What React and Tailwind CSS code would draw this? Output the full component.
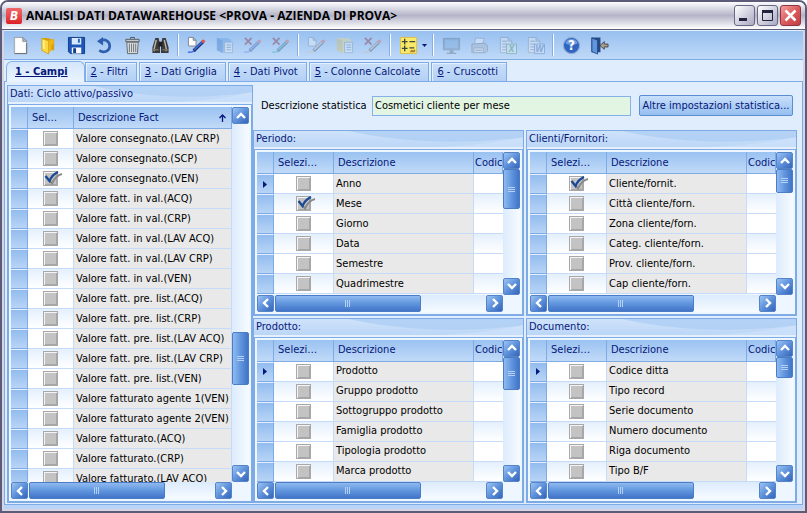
import React from "react";

const FACTS = [
  ["Valore consegnato.(LAV CRP)"],
  ["Valore consegnato.(SCP)"],
  ["Valore consegnato.(VEN)", true],
  ["Valore fatt. in val.(ACQ)"],
  ["Valore fatt. in val.(CRP)"],
  ["Valore fatt. in val.(LAV ACQ)"],
  ["Valore fatt. in val.(LAV CRP)"],
  ["Valore fatt. in val.(VEN)"],
  ["Valore fatt. pre. list.(ACQ)"],
  ["Valore fatt. pre. list.(CRP)"],
  ["Valore fatt. pre. list.(LAV ACQ)"],
  ["Valore fatt. pre. list.(LAV CRP)"],
  ["Valore fatt. pre. list.(VEN)"],
  ["Valore fatturato agente 1(VEN)"],
  ["Valore fatturato agente 2(VEN)"],
  ["Valore fatturato.(ACQ)"],
  ["Valore fatturato.(CRP)"],
  ["Valore fatturato.(LAV ACQ)"],
];

const PANELS = [
  {
    title: "Periodo:",
    current: true,
    thumb: 37,
    rows: [["Anno"], ["Mese", true], ["Giorno"], ["Data"], ["Semestre"], ["Quadrimestre"]],
  },
  {
    title: "Clienti/Fornitori:",
    thumb: 22,
    rows: [
      ["Cliente/fornit.", true],
      ["Città cliente/forn."],
      ["Zona cliente/forn."],
      ["Categ. cliente/forn."],
      ["Prov. cliente/forn."],
      ["Cap cliente/forn."],
    ],
  },
  {
    title: "Prodotto:",
    current: true,
    thumb: 31,
    rows: [
      ["Prodotto"],
      ["Gruppo prodotto"],
      ["Sottogruppo prodotto"],
      ["Famiglia prodotto"],
      ["Tipologia prodotto"],
      ["Marca prodotto"],
    ],
  },
  {
    title: "Documento:",
    current: true,
    thumb: 20,
    rows: [
      ["Codice ditta"],
      ["Tipo record"],
      ["Serie documento"],
      ["Numero documento"],
      ["Riga documento"],
      ["Tipo B/F"],
    ],
  },
];

const TABS = ["Campi", "Filtri", "Dati Griglia", "Dati Pivot", "Colonne Calcolate", "Cruscotti"];

function Pen({ color }) {
  return (
    <>
      <path d="M1 16.500c2 2 5-.5 8-1" fill="none" stroke={color} strokeWidth="1.500" />
      <path d="M7 15.500 17 6" stroke="#1d2a60" strokeWidth="3.400" />
      <path d="M7.500 14.600 16.500 6" stroke={color} strokeWidth="1.800" />
      <circle cx="17.200" cy="5.600" r="1.800" fill="#e8544a" />
    </>
  );
}

function MiniDoc() {
  return <path d="M1.500 1.500h5l3 3v6h-8z M6.500 1.500v3h3" fill="#fff" stroke="#808890" strokeWidth="1" />;
}

function MiniCross() {
  return <path d="m2 2 7 7M9 2 2 9" stroke="#7a1a2a" strokeWidth="2" />;
}

function Book({ color, dark }) {
  return (
    <>
      <path d="M2 2h11l4 2v11l-9 3-6-3z" fill={color} />
      <path d="m2 2 6 3v13l-6-3z" fill={dark} />
      <path d="M10 6.500h8.500v11H10z" fill="#f2f5f8" stroke="#7a8ca4" />
      <path d="M12 9.500h5M12 12h5M12 14.500h5" stroke="#5a7898" />
    </>
  );
}

function Sheet({ letter, color }) {
  return (
    <>
      <path d="M2.500 1.500h8l4 4v12h-12z M10.500 1.500v4h4" fill="#f3f6f8" stroke="#7c8792" />
      <path d="M4.500 5.500h5M4.500 8.500h5M4.500 11.500h4M4.500 14.500h4" stroke="#6a7682" />
      <path d="M9 8.500h10.500v10H9z" fill="#e6edea" stroke={color} />
      <text x="14.300" y="17" textAnchor="middle" fontSize="9" fontWeight="bold" fontStyle="italic" fill={color}>
        {letter}
      </text>
    </>
  );
}

const ICONS = {
  nuovo: (
    <>
      <path d="M3.500 1.500h9l4 4v13h-13z" fill="#f4f4f2" stroke="#9da1a8" />
      <path d="M5 3h6v4h4v10H5z" fill="#fff" />
      <path d="M12.500 1.500v4h4z" fill="#c9ccd2" stroke="#7d828c" />
      <path d="M4 18.500h12.500v-11" fill="none" stroke="#6d6f75" />
    </>
  ),
  apri: (
    <>
      <path d="M3 2h7l2 1.500h4V15h-6z" fill="#d6a30c" />
      <path d="M3 2.500 10 5v14l-7-4z" fill="#ffd83f" stroke="#c99a10" strokeWidth=".8" />
      <path d="m10 5 5.500-1.500V8L13 10v5l-3 3.500z" fill="#edb71b" />
      <path d="m4 4 2 1v9l-2-1z" fill="#fff09a" />
    </>
  ),
  salva: (
    <>
      <path d="M1.500 1.500h17v17H3.500l-2-2z" fill="#1d56b8" stroke="#123c88" />
      <path d="M5 2h10v7H5z" fill="#d9e8fb" />
      <path d="M11.500 3h2v4h-2z" fill="#2a62bd" />
      <path d="M5 12h10v6.500H5z" fill="#f7fafe" />
      <path d="M6.500 13h3v5h-3z" fill="#123c88" />
    </>
  ),
  annulla: (
    <>
      <path d="M6 5.200C10.500 2.500 16 5.500 15.500 11.300c-.5 5-7 7-11 3.700" fill="none" stroke="#2d5fae" strokeWidth="2.800" />
      <path d="M8.500 1v9L2 5.500z" fill="#2d5fae" />
    </>
  ),
  elimina: (
    <>
      <path d="M4 6.500h12l-.8 12H4.800z" fill="#dfe2e3" stroke="#62686d" />
      <path d="M3 3.500h14v2.500H3z" fill="#c6cacd" stroke="#565c62" />
      <path d="M8 3V1.500h4V3" fill="none" stroke="#4f555b" />
      <path d="M6.700 8v9M9 8v9M11.200 8v9M13.400 8v9" stroke="#686e74" />
    </>
  ),
  cerca: (
    <>
      <path d="M4.500 2h3.500l1.500 7v9h-8V12z" fill="#3a3a3a" />
      <path d="M12 2h3.500l3 10v6h-8V9z" fill="#3a3a3a" />
      <path d="M8 6h4v5H8z" fill="#1f1f1f" />
      <path d="M5.500 4 3.500 13v3M14 4l2 9v3" fill="none" stroke="#b9b5a8" strokeWidth="1.500" />
      <path d="M2 14.500h6M12 14.500h6" stroke="#7a6c5a" strokeWidth="1.500" />
    </>
  ),
  modifica: (
    <>
      <MiniDoc />
      <Pen color="#3f6be0" />
    </>
  ),
  libroBlu: <Book color="#5a9ae0" dark="#2b6cc0" />,
  togliBlu: (
    <>
      <MiniCross />
      <Pen color="#4c7ee8" />
    </>
  ),
  togliVerde: (
    <>
      <MiniCross />
      <Pen color="#2aa89c" />
    </>
  ),
  modificaGiallo: (
    <>
      <MiniDoc />
      <Pen color="#d8c890" />
    </>
  ),
  libroGiallo: <Book color="#f0e07c" dark="#dcbc50" />,
  togliGiallo: (
    <>
      <MiniCross />
      <Pen color="#c8b880" />
    </>
  ),
  formule: (
    <>
      <path d="M1.500 1.500h17v17h-17z" fill="#fbe868" stroke="#dcc04a" />
      <path d="M3 6h6M6 3v6M11 6h6M3 13h6M6 10v6M11 12.500h5" stroke="#3a4a3a" strokeWidth="1.400" />
      <path d="M11 17h6v-3l-2 1-2-.5z" fill="#a88430" />
    </>
  ),
  monitor: (
    <>
      <path d="M1.500 2.500h17v12h-17z" fill="#5d7fa4" stroke="#41566e" />
      <path d="M3.500 4.500h13v8h-13z" fill="#6ea2d4" />
      <path d="M8 15h4v2.500h3v1.500H5v-1.500h3z" fill="#4f5b68" />
    </>
  ),
  stampa: (
    <>
      <path d="m6 2 9 .5-1.500 6h-9z" fill="#fff" stroke="#7e8790" />
      <path d="m2 8.500 14-1 2.500 3v5L16 17.500H2z" fill="#a9b1ba" stroke="#5e6872" />
      <path d="M4 12.500h10v5H4z" fill="#e8ecef" stroke="#6f7880" />
      <path d="M5.500 15h7" stroke="#59626b" />
    </>
  ),
  excel: <Sheet letter="X" color="#3c8a5a" />,
  word: <Sheet letter="W" color="#3f66b4" />,
  aiuto: (
    <>
      <circle cx="10" cy="10" r="8.500" fill="#2f65c0" stroke="#8ca8d4" strokeWidth="1.200" />
      <path d="M3.500 7.500a7 7 0 0 1 13 0c-3 2-9 2.500-13 0z" fill="#6f9ce2" />
      <text x="10" y="15" textAnchor="middle" fontSize="14" fontWeight="bold" fill="#fff">
        ?
      </text>
    </>
  ),
  esci: (
    <>
      <path d="M1.500 1.500H11V17H1.500z" fill="#274a86" />
      <path d="m2 2 6 2.500V19l-6-2.500z" fill="#5f96de" stroke="#1f3f78" strokeWidth=".8" />
      <path d="m10.500 10 4.500-4v2.500h4v3h-4V14z" fill="#aaa092" stroke="#423d38" strokeWidth=".9" />
    </>
  ),
};

const TOOLS = [
  ["nuovo", "Nuovo"],
  ["apri", "Apri"],
  ["salva", "Salva"],
  ["annulla", "Annulla"],
  ["elimina", "Elimina"],
  ["cerca", "Cerca"],
  null,
  ["modifica", "Modifica"],
  ["libroBlu", "Archivio", true],
  ["togliBlu", "Rimuovi", true],
  ["togliVerde", "Rimuovi tutto", true],
  null,
  ["modificaGiallo", "Modifica modello", true],
  ["libroGiallo", "Archivio modelli", true],
  ["togliGiallo", "Rimuovi modello", true],
  null,
  ["formule", "Formule"],
  "menu",
  null,
  ["monitor", "Anteprima", true],
  ["stampa", "Stampa", true],
  ["excel", "Esporta in Excel", true],
  ["word", "Esporta in Word", true],
  null,
  ["aiuto", "Aiuto"],
  ["esci", "Esci"],
];

function Toolbar() {
  return (
    <div className="flex h-[30px] shrink-0 items-center border-t border-b border-t-[#e4f0fd] border-b-[#7eaae6] bg-linear-to-b from-[#98c0f0] to-[#bfd9f8] pl-0.5">
      {TOOLS.map((tool, i) => {
        if (tool === null) {
          return (
            <span key={i} className="flex w-2 justify-center">
              <span className="h-[22px] w-0.5 border-l border-l-[#86aee4] bg-white" />
            </span>
          );
        }
        if (tool === "menu") {
          return (
            <button key={i} type="button" aria-label="Altre formule" className="flex w-[7px] items-center">
              <svg viewBox="0 0 5 3" className="h-[3px] w-[5px]">
                <path d="M0 0h5L2.500 3z" fill="#06187a" />
              </svg>
            </button>
          );
        }
        const [icon, label, disabled] = tool;
        return (
          <button
            key={i}
            type="button"
            aria-label={label}
            disabled={disabled}
            className="flex h-6 w-7 items-center justify-center disabled:opacity-35"
          >
            <svg viewBox="0 0 20 20" className="size-[19px]">
              {ICONS[icon]}
            </svg>
          </button>
        );
      })}
    </div>
  );
}

function Tabs() {
  return (
    <div role="tablist" className="flex h-[22px] shrink-0 items-end gap-0.5 border-b border-[#7eaae6] bg-[#dfedfd] pl-0.5">
      {TABS.map((name, i) => (
        <button
          key={name}
          type="button"
          role="tab"
          aria-selected={i === 0}
          className={
            i === 0
              ? "-mr-0.5 -mb-px h-[21px] rounded-t-md border border-b-0 border-[#86b0e8] bg-linear-to-b from-[#d4e6fb] to-[#eaf4ff] pr-4 pl-2 font-bold text-[#06187a] underline"
              : "h-[19px] border border-b-0 border-[#7eaae6] bg-linear-to-b from-[#c9dff9] to-[#b2d0f5] pr-2 pl-[5px] text-[#06187a] shadow-[inset_1px_1px_0_#e4f0fd]"
          }
        >
          {i === 0 ? "1 - Campi" : <><u>{i + 1}</u> - {name}</>}
        </button>
      ))}
    </div>
  );
}

const CHEVRONS = {
  up: "m3 9 4-4 4 4",
  down: "m3 5 4 4 4-4",
  left: "M9 3 5 7l4 4",
  right: "m5 3 4 4-4 4",
};

function ArrowButton({ dir }) {
  const label = { up: "Scorri su", down: "Scorri giù", left: "Scorri a sinistra", right: "Scorri a destra" }[dir];
  return (
    <button
      type="button"
      aria-label={label}
      className="flex size-[17px] shrink-0 items-center justify-center rounded-xs border border-[#5584c8] bg-linear-to-br from-[#9cc4f2] via-[#5f92dc] to-[#3464b8]"
    >
      <svg viewBox="0 0 14 14" className="size-[14px]">
        <path d={CHEVRONS[dir]} fill="none" stroke="#fff" strokeWidth="2.400" />
      </svg>
    </button>
  );
}

function VScroll({ start, size }) {
  return (
    <div className="flex w-[17px] shrink-0 flex-col bg-linear-to-r from-[#dcebfd] to-[#f6fbff]">
      <ArrowButton dir="up" />
      <div className="min-h-0 flex-1">
        <div style={{ height: `${start}%` }} />
        <div
          className="flex flex-col items-center justify-center gap-px rounded-xs border border-[#4c7cc4] bg-linear-to-r from-[#8fbaf0] via-[#6196de] to-[#4274c8]"
          style={{ height: `${size}%` }}
        >
          <span className="h-px w-[7px] bg-[#b4d2f8]" />
          <span className="h-px w-[7px] bg-[#b4d2f8]" />
          <span className="h-px w-[7px] bg-[#b4d2f8]" />
        </div>
      </div>
      <ArrowButton dir="down" />
    </div>
  );
}

function HScroll({ size }) {
  return (
    <div className="mr-[17px] flex h-[17px] shrink-0 bg-linear-to-b from-[#dcebfd] to-[#f6fbff]">
      <ArrowButton dir="left" />
      <div className="min-w-0 flex-1 pl-px">
        <div
          className="flex h-full items-center justify-center gap-px rounded-xs border border-[#4c7cc4] bg-linear-to-b from-[#8fbaf0] via-[#6196de] to-[#4274c8]"
          style={{ width: `${size}%` }}
        >
          <span className="h-[7px] w-px bg-[#b4d2f8]" />
          <span className="h-[7px] w-px bg-[#b4d2f8]" />
          <span className="h-[7px] w-px bg-[#b4d2f8]" />
        </div>
      </div>
      <ArrowButton dir="right" />
    </div>
  );
}

function Check({ label, checked }) {
  return (
    <label className="relative mx-auto block size-[15px]">
      <input
        type="checkbox"
        aria-label={label}
        defaultChecked={checked}
        className="peer block size-[15px] appearance-none border border-[#a8a8a8] bg-[#c3c3c3] shadow-[inset_1px_1px_0_#f4f4f4,inset_-1px_-1px_0_#a6a6a6]"
      />
      <svg viewBox="0 0 20 14" className="pointer-events-none absolute top-0 left-0 hidden h-[14px] w-5 peer-checked:block">
        <path d="m7 10 2 2.500C11 8 14 4 19 3" fill="none" stroke="#8a8a8a" strokeWidth="2" />
        <path d="m2.500 5 4 5C8 6.500 10.500 3 15 1" fill="none" stroke="#1c4a96" strokeWidth="2.400" />
      </svg>
    </label>
  );
}

function DataGrid({ rows, current, wide, start = 0, vSize, hSize }) {
  const head = "overflow-hidden border-r border-b border-[#7eaae6] p-0 text-left font-normal whitespace-nowrap text-[#06187a]";
  return (
    <div className="flex min-h-0 flex-1 flex-col border border-[#7eaae6] bg-[#eef6ff] p-0.5">
      <div className="flex min-h-0 flex-1">
        <div className="h-0 min-h-full min-w-0 flex-1 overflow-hidden">
          <table className="w-full table-fixed border-separate border-spacing-0">
            <colgroup>
              <col className="w-[17px]" />
              <col className={wide ? "w-[46px]" : "w-[60px]"} />
              <col className={wide ? "" : "w-[140px]"} />
              {!wide && <col />}
            </colgroup>
            <thead>
              <tr className="h-[22px] bg-linear-to-b from-[#9ac2f1] to-[#c3dbf8]">
                <th className={head} aria-label="Riga corrente" />
                <th className={head + " pl-1"}>{wide ? "Sel…" : "Selezi…"}</th>
                <th className={head + " pl-1"}>
                  {wide ? (
                    <span className="flex items-center justify-between pr-[5px]">
                      Descrizione Fact
                      <svg viewBox="0 0 7 8" className="h-2 w-[7px]">
                        <path d="M3.500 8V1M.500 4l3-3 3 3" fill="none" stroke="#06187a" strokeWidth="1.300" />
                      </svg>
                    </span>
                  ) : (
                    "Descrizione"
                  )}
                </th>
                {!wide && <th className={head + " pl-px"}>Codic</th>}
              </tr>
            </thead>
            <tbody>
              {rows.map(([name, checked], i) => {
                const stripe = i % 2 ? "bg-linear-to-b from-[#e4f0fd] to-white" : "bg-white";
                return (
                  <tr key={name} className="h-5">
                    <td className="border-t border-r border-b border-t-[#e4f0fd] border-r-[#7eaae6] border-b-[#7eaae6] bg-linear-to-b from-[#92bcee] to-[#b8d4f6] p-0">
                      {current && i === 0 && (
                        <svg viewBox="0 0 4 7" className="mx-auto h-[7px] w-1">
                          <path d="M0 0v7l4-3.500z" fill="#06187a" />
                        </svg>
                      )}
                    </td>
                    <td className={"border-r border-b border-[#c5dbf7] p-0 " + stripe}>
                      <Check label={name} checked={checked} />
                    </td>
                    <td className="overflow-hidden border-r border-b border-[#c5dbf7] bg-[#e9e9e9] p-0 pl-0.5 whitespace-nowrap text-black">
                      {name}
                    </td>
                    {!wide && <td className={"border-b border-[#c5dbf7] p-0 " + stripe} />}
                  </tr>
                );
              })}
            </tbody>
          </table>
        </div>
        <VScroll start={start} size={vSize} />
      </div>
      <HScroll size={hSize} />
    </div>
  );
}

function Panel({ title, children }) {
  return (
    <section className="flex min-h-0 min-w-0 flex-col border border-[#7eaae6] bg-[#e4f0fd]">
      <h2 className="relative h-[18px] shrink-0 overflow-hidden border-b-2 border-[#e4f0fd] bg-linear-to-b from-[#cfe2fa] to-[#bbd6f7] pl-0.5 text-[#06187a]">
        <svg viewBox="0 0 270 18" preserveAspectRatio="none" className="absolute inset-0 size-full">
          <path d="M95 0C150 14 215 15 270 7V0z" fill="#a9ccf4" opacity=".7" />
          <path d="M120 18c70 2 115-3 150-11v11z" fill="#d3e5fb" opacity=".5" />
        </svg>
        <span className="relative leading-4">{title}</span>
      </h2>
      {children}
    </section>
  );
}

function TitleBar() {
  const button = "flex size-[21px] items-center justify-center rounded-[3px] border";
  return (
    <header className="flex h-7 shrink-0 items-center border-b border-[#5c5c78] bg-linear-to-b from-[#fdfdff] via-[#b4b4c8] to-white pr-1 pl-1">
      <span
        aria-hidden="true"
        className="mr-1 flex size-4 items-center justify-center rounded-xs bg-linear-to-b from-[#f0686a] to-[#dc1c26] text-[12px] leading-none font-bold text-white italic"
      >
        B
      </span>
      <h1 className="min-w-0 flex-1 truncate font-['Open_Sans','Noto_Sans',sans-serif] text-[12px] font-bold text-black">
        ANALISI DATI DATAWAREHOUSE &lt;PROVA - AZIENDA DI PROVA&gt;
      </h1>
      <div className="flex gap-0.5">
        <button type="button" aria-label="Riduci a icona" className={button + " border-[#686884] bg-linear-to-br from-white to-[#a9a9c2]"}>
          <svg viewBox="0 0 19 19" className="size-[19px]">
            <path d="M4 12h8v3H4z" fill="#20243c" />
          </svg>
        </button>
        <button type="button" aria-label="Ingrandisci" className={button + " border-[#686884] bg-linear-to-br from-white to-[#a9a9c2]"}>
          <svg viewBox="0 0 19 19" className="size-[19px]">
            <path d="M4.500 5v9.500h10V5z" fill="none" stroke="#20243c" />
            <path d="M4 4h11v3H4z" fill="#20243c" />
          </svg>
        </button>
        <button type="button" aria-label="Chiudi" className={button + " border-[#8c3440] bg-linear-to-br from-[#f0a0a0] via-[#dc5c5c] to-[#c03c44]"}>
          <svg viewBox="0 0 19 19" className="size-[19px]">
            <path d="m4.500 4.500 10 10m0-10-10 10" stroke="#fff" strokeWidth="2.600" />
          </svg>
        </button>
      </div>
    </header>
  );
}

export default function App() {
  return (
    <div className="flex h-screen w-full flex-col overflow-hidden rounded-t-lg border-2 border-[#5c5c78] bg-white font-['DejaVu_Sans_Condensed','DejaVu_Sans',sans-serif] text-[11px] leading-4">
      <TitleBar />
      <div className="flex min-h-0 flex-1 flex-col border-x-2 border-b-2 border-[#d4d4e4] bg-[#b9d4f7] pb-1">
        <Toolbar />
        <Tabs />
        <main className="flex min-h-0 flex-1 border-x border-b border-[#7eaae6] bg-[#dfedfd] pt-[3px] pr-[5px] pb-px pl-0.5">
          <div className="grid w-[246px] shrink-0">
            <Panel title="Dati: Ciclo attivo/passivo">
              <DataGrid wide rows={FACTS} start={61} vSize={15.600} hSize={73} />
            </Panel>
          </div>
          <div className="flex min-w-0 flex-1 flex-col">
            <div className="flex h-[45px] shrink-0 items-center gap-2 pr-1 pb-1 pl-2">
              <label htmlFor="descrizione" className="w-[103px] shrink-0 whitespace-nowrap text-black">
                Descrizione statistica
              </label>
              <input
                id="descrizione"
                type="text"
                defaultValue="Cosmetici cliente per mese"
                className="h-5 min-w-0 flex-1 border border-[#86b0e8] bg-[#e2f5e2] px-0.5 text-black"
              />
              <button
                type="button"
                className="h-[21px] w-[154px] shrink-0 rounded-xs border border-[#5c8cd4] bg-linear-to-b from-[#c9e0fa] to-[#96bff0] whitespace-nowrap text-[#06187a]"
              >
                Altre impostazioni statistica...
              </button>
            </div>
            <div className="grid min-h-0 flex-1 grid-cols-2 grid-rows-2 gap-0.5">
              {PANELS.map((panel) => (
                <Panel key={panel.title} title={panel.title}>
                  <DataGrid rows={panel.rows} current={panel.current} vSize={panel.thumb} hSize={69} />
                </Panel>
              ))}
            </div>
          </div>
        </main>
      </div>
    </div>
  );
}
